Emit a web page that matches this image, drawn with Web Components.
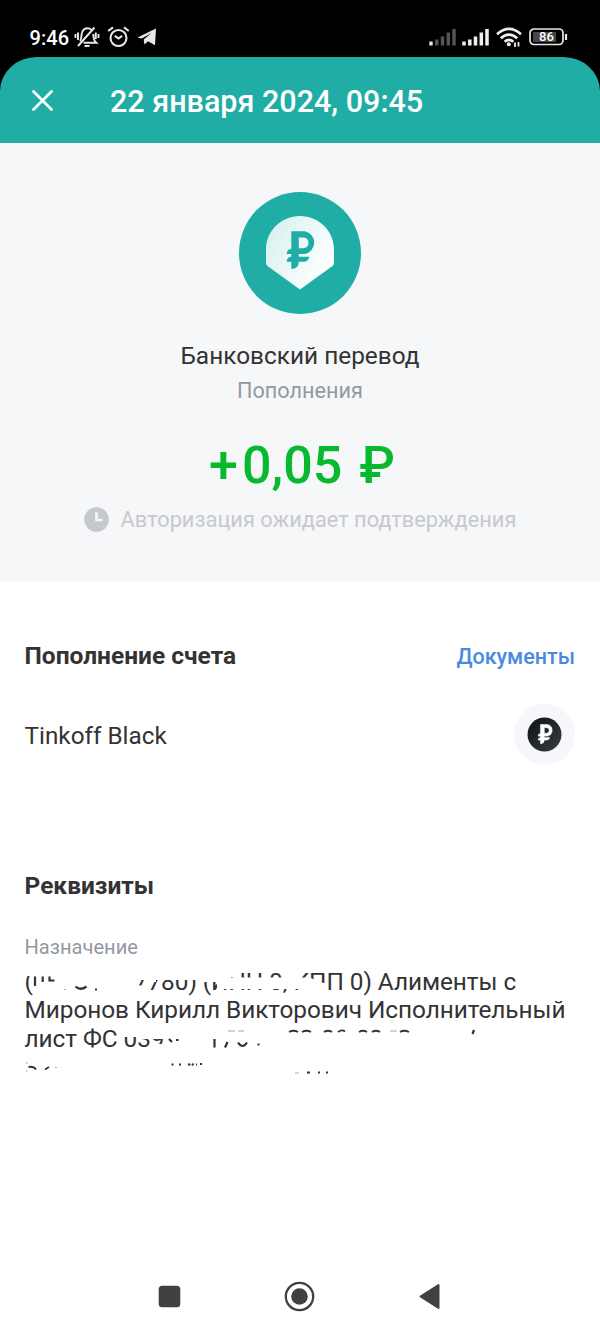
<!DOCTYPE html>
<html lang="ru"><head><meta charset="utf-8"><title>Операция</title>
<style>html,body{margin:0;background:#fff;font-family:Roboto,"Liberation Sans",sans-serif;color:#333}</style></head><body>
<bank-operation></bank-operation>
<script>
const define=(name,css,html)=>customElements.define(name,class extends HTMLElement{constructor(){super();this.attachShadow({mode:'open'}).innerHTML='<style>*{box-sizing:border-box}svg{display:block;flex:none}'+css+'</style>'+html}});

define('status-bar',`:host{display:flex;height:57px;background:#000;color:#fff;justify-content:space-between;padding:16px 32px 0 29.500px;font:500 20px/42px Roboto,sans-serif}
.l,.r{display:flex;height:42px;align-items:center}.time{letter-spacing:.1px;width:44px;margin-top:1px}.battery{width:39px;height:18px;display:flex;position:relative;font:500 13px/18px Roboto,sans-serif;justify-content:center;padding-right:4px}.battery svg{position:absolute;inset:0}.battery span{position:relative}`,
`<div class="l"><span class="time">9:46</span>
<svg width="26" height="22" viewBox="0 0 26 22" fill="none" stroke="#e8e8e8" stroke-width="1.900"><path d="M6 15c2-2 1-6 2-8.500C9 3.500 11 2.300 13.500 2.300c1.700 0 3 .6 4 1.700M19.300 8c0 4 .3 6.500 3 8.700H9.500M4 20 20.500 1.500M1.500 8v4M4 6.500v7.500M21.800 6.500v6.500M24.500 8v4M10.500 20h5"/></svg>
<svg width="23" height="22" viewBox="0 0 23 22" style="margin-left:7px" fill="none" stroke="#e8e8e8" stroke-width="2.100"><circle cx="11.500" cy="12" r="8"/><path d="m1.200 5 4.800-3.700M21.800 5 17 1.300M7.800 9.800l3.700 2.700 3.600-2.700"/></svg>
<svg width="20" height="20" viewBox="0 0 20 20" style="margin-left:7px"><path d="M.5 10.500 19 1.500l-1 16.800-7-4-3.500 3.200-.8-5.100L14.500 6 4.700 11.500Z" fill="#e8e8e8"/></svg></div>
<div class="r"><svg width="27" height="18" viewBox="0 0 27 18" stroke-width="3.400"><path stroke="#e8e8e8" d="M2 17.500v-4"/><path stroke="#555" d="M7.800 17.500v-6M13.500 17.500V8.500M19.300 17.500v-13M25 17.500V1"/></svg>
<svg width="27" height="18" viewBox="0 0 27 18" style="margin-left:6px" stroke="#eee" stroke-width="3.500"><path d="M2 17.500v-4M7.800 17.500v-6M13.500 17.500V8.500M19.300 17.500v-13M25 17.500V1"/></svg>
<svg width="26" height="20" viewBox="0 0 26 20" style="margin-left:7px" fill="none" stroke="#eee" stroke-width="2.700"><path d="M1 7.200Q13-3.500 25 7.200M4.800 11.200Q13 4 21.200 11.200M8.600 14.800Q13 11 17.400 14.800"/><circle cx="12.800" cy="17.300" r="2" fill="#eee" stroke="none"/><path d="M19 20v-4.500M22.500 15v4.500" stroke-width="1.800"/></svg>
<div class="battery" style="margin-left:7px"><svg width="39" height="18" viewBox="0 0 39 18"><rect x="1" y="1" width="33" height="15.500" rx="4" fill="none" stroke="#e8e8e8" stroke-width="1.700"/><rect x="4" y="4" width="23" height="10" fill="#444"/><path d="M37 6v6" stroke="#e8e8e8" stroke-width="2.200"/></svg><span>86</span></div></div>`);

define('operation-header',`:host{display:block;background:#000}.bar{height:85.500px;background:#1fada5;color:#fff;border-radius:37px 37px 0 0/34px 34px 0 0;display:flex;align-items:center;padding:4px 0 0 32px;gap:57px;font:500 30.500px/40px Roboto,sans-serif}svg{margin-top:-3px}`,
`<div class="bar"><svg width="21" height="21" viewBox="0 0 21 21"><path d="m1.500 1.500 18 18m0-18-18 18" stroke="#fff" stroke-width="2.700" stroke-linecap="round"/></svg><span><slot></slot></span></div>`);

define('operation-hero',`:host{display:flex;flex-direction:column;align-items:center;background:#f5f7f9;height:438.500px;padding-top:49.500px;white-space:nowrap}
.name{font-size:24.400px;line-height:28px;margin-top:28px}.cat{font-size:21.700px;line-height:26px;color:#9299a2;margin-top:8px}.sum{font:500 52px/60px Roboto,sans-serif;color:#08b92f;margin:32px 0 0 4px;word-spacing:4px}.sum span{margin-right:4px}.state{display:flex;align-items:center;gap:12px;font-size:21.800px;line-height:26px;color:#c7c9cd;margin-top:10px}.state span{position:relative;top:1px}`,
`<svg width="122" height="122" viewBox="0 0 122 122"><defs><linearGradient id="g" x1="0" y1="0" x2="1" y2=".6"><stop stop-color="#d4efef"/><stop offset="1" stop-color="#fff"/></linearGradient></defs><circle cx="61" cy="61" r="61" fill="#1fada5"/><path d="M27 57.500C27 39 42 24 61 24s34 15 34 33.500V71q0 2-1.500 3L61 97.500 28.500 74Q27 73 27 71Z" fill="url(#g)"/>
<path transform="translate(.8 0)" d="M51.500 39.200H65a11.600 11.600 0 0 1 0 22.800h-6v2.800h10.500q-1 5-5.500 5h-5q0 7-7.500 7.200v-7.200h-4.700q.5-5 4.700-5V62h-4.700q.5-5 4.700-5Zm7.500 6.300v10.700h5a5.400 5.400 0 0 0 0-10.700Z" fill="#1fada5" fill-rule="evenodd"/></svg>
<div class="name">Банковский перевод</div><div class="cat">Пополнения</div><div class="sum"><span>+</span>0,05 ₽</div>
<div class="state"><svg width="25" height="25" viewBox="0 0 25 25"><circle cx="12.500" cy="12.500" r="12.300" fill="#c5c8cd"/><path d="M12.500 5.500v7.500h6" fill="none" stroke="#f5f7fa" stroke-width="2.700"/></svg><span>Авторизация ожидает подтверждения</span></div>`);

define('account-section',`:host{display:block;padding:58px 25px 0 24.500px}.head,.row{display:flex;justify-content:space-between;align-items:center}.head{height:32px;font-weight:700;font-size:24.500px}.link{font-weight:500;font-size:21.500px;color:#4a8be0;margin-top:3px}.row{margin-top:32.500px;height:61px;font-size:24.300px}.row span{margin-top:2px}`,
`<div class="head"><span>Пополнение счета</span><span class="link">Документы</span></div>
<div class="row"><span>Tinkoff Black</span><svg width="61" height="61" viewBox="0 0 61 61"><defs><linearGradient id="k" x2="1" y2="1"><stop stop-color="#0d1018"/><stop offset="1" stop-color="#3b3d43"/></linearGradient></defs><circle cx="30.500" cy="30.500" r="30.500" fill="#f5f7fa"/><circle cx="30.500" cy="30.500" r="17" fill="url(#k)"/><path transform="translate(.2 .5) scale(.51)" d="M51.500 39.200H65a11.600 11.600 0 0 1 0 22.800h-6v2.800h10.500q-1 5-5.500 5h-5q0 7-7.500 7.200v-7.200h-4.700q.5-5 4.700-5V62h-4.700q.5-5 4.700-5Zm7.500 6.300v10.700h5a5.400 5.400 0 0 0 0-10.700Z" fill="#fff" fill-rule="evenodd" stroke="#fff"/></svg></div>`);

define('payment-details',`:host{display:block;padding:105px 0 0 24.500px;height:496.500px}.title{font-weight:700;font-size:24.500px;line-height:32px}.label{font-size:20.100px;line-height:24px;color:#9299a2;margin-top:33px}.text{position:relative;font-size:24.400px;line-height:28.600px;letter-spacing:-.06px;margin-top:9px;white-space:nowrap}.text i{display:inline-block;width:101px}.text svg{position:absolute;left:-24.500px;top:-8px}`,
`<div class="title">Реквизиты</div><div class="label">Назначение</div><div class="text"><div>(<i></i>7780) (ИНН 0, КПП 0) Алименты с</div><div>Миронов Кирилл Викторович Исполнительный</div><div>лист ФС 039</div>
<svg width="600" height="120" viewBox="0 960 600 120"><path fill="#fff" d="M24 968h10v8H24ZM130 968h68v12h-68ZM130 985.500h16v8h-16ZM144 979h12v3h-12ZM199 968h32v14h-32ZM217 977.500h92l3 1 9 4 6 1v10h-22v-4.500h-88ZM231 968h9v9h-9ZM290 968h11v11h-11ZM122 1026h16v11h-16ZM137 1026h34v13h-34ZM152 1044h19v8h-19Z"/>
<g fill="none" stroke="#333" stroke-width="2.200"><path d="M35 976.500v9.500M42.700 976.500v5.500M49.500 976.500v5M49 980.500h5.500M75.500 986.500q5 4.500 11 0M95 989.500h2M169 1039l3 3M176 1040h2.500M214.500 1039v8.500M227.500 1042l-2.500 5.500M238 1042.500q4.500 7 9 0M257.500 1044.500h2M474 1030l-1.500 4"/>
<path stroke-width="1.800" d="M289 1032q4.500-2.500 9 0M302 1032q4.500-2.500 9 0M324 1032q4-2.500 8 0M338 1032q4-3 7-.5M359 1032q4-2.500 8 0M372 1032q4-2.500 8 0M400 1032q4-2.500 9 0M28.500 1067q5-1 7.500 2.500M45 1069.500l4-2.500M171.500 1064.500h2M179 1064.500h2M188 1064.500h2.500M192 1065.500l1.500-2M196 1064.500h1M200 1064h2M307 1072.500h3M318 1072.500h2M326 1072.500h2"/>
<path stroke="#aaa" stroke-width="1.200" d="M64 989.500h2M228 1031h7M238 1031h6M390 1031h7M26 1062.500l1.500 1M26 1071h1.500M55 1067.500h2M295 1073h4"/></g></svg></div>`);

define('navigation-bar',`:host{display:flex;height:70px;align-items:center;padding-left:158px}svg+svg{margin-left:103px}svg+svg+svg{margin-left:103.500px}`,
`<svg width="23" height="23"><rect x=".7" y=".7" width="21.600" height="21.600" rx="3.500" fill="#414141"/></svg><svg width="31" height="31"><circle cx="15.500" cy="15.500" r="13.700" fill="none" stroke="#414141" stroke-width="2.300"/><circle cx="15.500" cy="15.500" r="8.300" fill="#414141"/></svg><svg width="21" height="27"><path d="M1.500 13.500 19.500 2v23Z" fill="#414141" stroke="#414141" stroke-width="2" stroke-linejoin="round"/></svg>`);

define('bank-operation',`:host{display:block;width:600px;height:1332px;background:#fff;overflow:hidden}`,
`<status-bar></status-bar><operation-header>22 января 2024, 09:45</operation-header><operation-hero></operation-hero><account-section></account-section><payment-details></payment-details><navigation-bar></navigation-bar>`);
</script></body></html>
